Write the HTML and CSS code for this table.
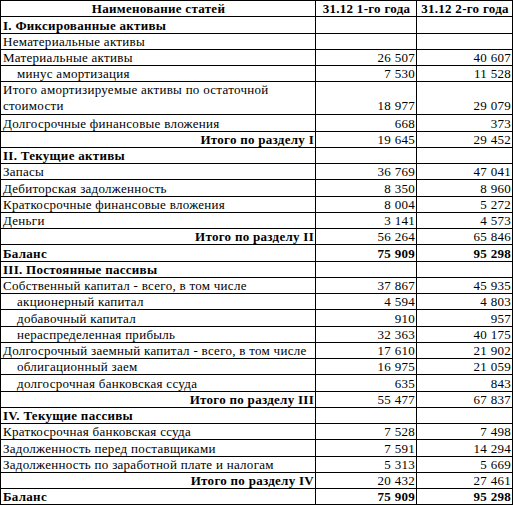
FILE: index.html
```html
<!DOCTYPE html>
<html lang="ru">
<head>
<meta charset="utf-8">
<title>Баланс</title>
<link rel="stylesheet" href="styles.css">
</head>
<body>
<table class="sheet">
<colgroup><col class="c-name"><col class="c-val"><col class="c-val2"></colgroup>
<tr class="head"><th>Наименование статей</th><th>31.12 1-го года</th><th>31.12 2-го года</th></tr>
<tr class="sec"><td>I. Фиксированные активы</td><td></td><td></td></tr>
<tr><td>Нематериальные активы</td><td></td><td></td></tr>
<tr><td>Материальные активы</td><td class="n">26 507</td><td class="n">40 607</td></tr>
<tr><td class="ind">минус амортизация</td><td class="n">7 530</td><td class="n">11 528</td></tr>
<tr class="dbl"><td>Итого амортизируемые активы по остаточной<br>стоимости</td><td class="n">18 977</td><td class="n">29 079</td></tr>
<tr><td>Долгосрочные финансовые вложения</td><td class="n">668</td><td class="n">373</td></tr>
<tr class="tot"><td>Итого по разделу I</td><td class="n">19 645</td><td class="n">29 452</td></tr>
<tr class="sec"><td>II. Текущие активы</td><td></td><td></td></tr>
<tr><td>Запасы</td><td class="n">36 769</td><td class="n">47 041</td></tr>
<tr><td>Дебиторская задолженность</td><td class="n">8 350</td><td class="n">8 960</td></tr>
<tr><td>Краткосрочные финансовые вложения</td><td class="n">8 004</td><td class="n">5 272</td></tr>
<tr><td>Деньги</td><td class="n">3 141</td><td class="n">4 573</td></tr>
<tr class="tot"><td>Итого по разделу II</td><td class="n">56 264</td><td class="n">65 846</td></tr>
<tr class="bal"><td>Баланс</td><td class="n">75 909</td><td class="n">95 298</td></tr>
<tr class="sec"><td>III. Постоянные пассивы</td><td></td><td></td></tr>
<tr><td>Собственный капитал - всего, в том числе</td><td class="n">37 867</td><td class="n">45 935</td></tr>
<tr><td class="ind">акционерный капитал</td><td class="n">4 594</td><td class="n">4 803</td></tr>
<tr><td class="ind">добавочный капитал</td><td class="n">910</td><td class="n">957</td></tr>
<tr><td class="ind">нераспределенная прибыль</td><td class="n">32 363</td><td class="n">40 175</td></tr>
<tr><td>Долгосрочный заемный капитал - всего, в том числе</td><td class="n">17 610</td><td class="n">21 902</td></tr>
<tr><td class="ind">облигационный заем</td><td class="n">16 975</td><td class="n">21 059</td></tr>
<tr><td class="ind">долгосрочная банковская ссуда</td><td class="n">635</td><td class="n">843</td></tr>
<tr class="tot"><td>Итого по разделу III</td><td class="n">55 477</td><td class="n">67 837</td></tr>
<tr class="sec"><td>IV. Текущие пассивы</td><td></td><td></td></tr>
<tr><td>Краткосрочная банковская ссуда</td><td class="n">7 528</td><td class="n">7 498</td></tr>
<tr><td>Задолженность перед поставщиками</td><td class="n">7 591</td><td class="n">14 294</td></tr>
<tr><td>Задолженность по заработной плате и налогам</td><td class="n">5 313</td><td class="n">5 669</td></tr>
<tr class="tot"><td>Итого по разделу IV</td><td class="n">20 432</td><td class="n">27 461</td></tr>
<tr class="bal"><td>Баланс</td><td class="n">75 909</td><td class="n">95 298</td></tr>
</table>
</body>
</html>
```

FILE: styles.css
```css
html, body {
  margin: 0;
  padding: 0;
  background: #ffffff;
}
.sheet {
  border-collapse: collapse;
  table-layout: fixed;
  width: 512px;
  font-family: "Liberation Serif", "Times New Roman", serif;
  font-size: 13px;
  letter-spacing: 0.28px;
  color: #000;
}
.c-name { width: 315px; }
.c-val { width: 101px; }
.c-val2 { width: 96px; }
.sheet th, .sheet td {
  border: 1px solid #000;
  padding: 0 1px 0 2px;
  height: 15.25px;
  line-height: 15px;
  vertical-align: bottom;
  white-space: nowrap;
  overflow: hidden;
}
.sheet th {
  font-weight: bold;
  text-align: center;
}
.sheet .dbl td {
  height: 31.5px;
  line-height: 16px;
}
.sheet td.n { text-align: right; }
.sheet td.ind { padding-left: 16px; }
.sec td { font-weight: bold; }
.tot td { font-weight: bold; }
.tot td:first-child { text-align: right; }
.tot td.n { font-weight: normal; }
.bal td { font-weight: bold; }
```
